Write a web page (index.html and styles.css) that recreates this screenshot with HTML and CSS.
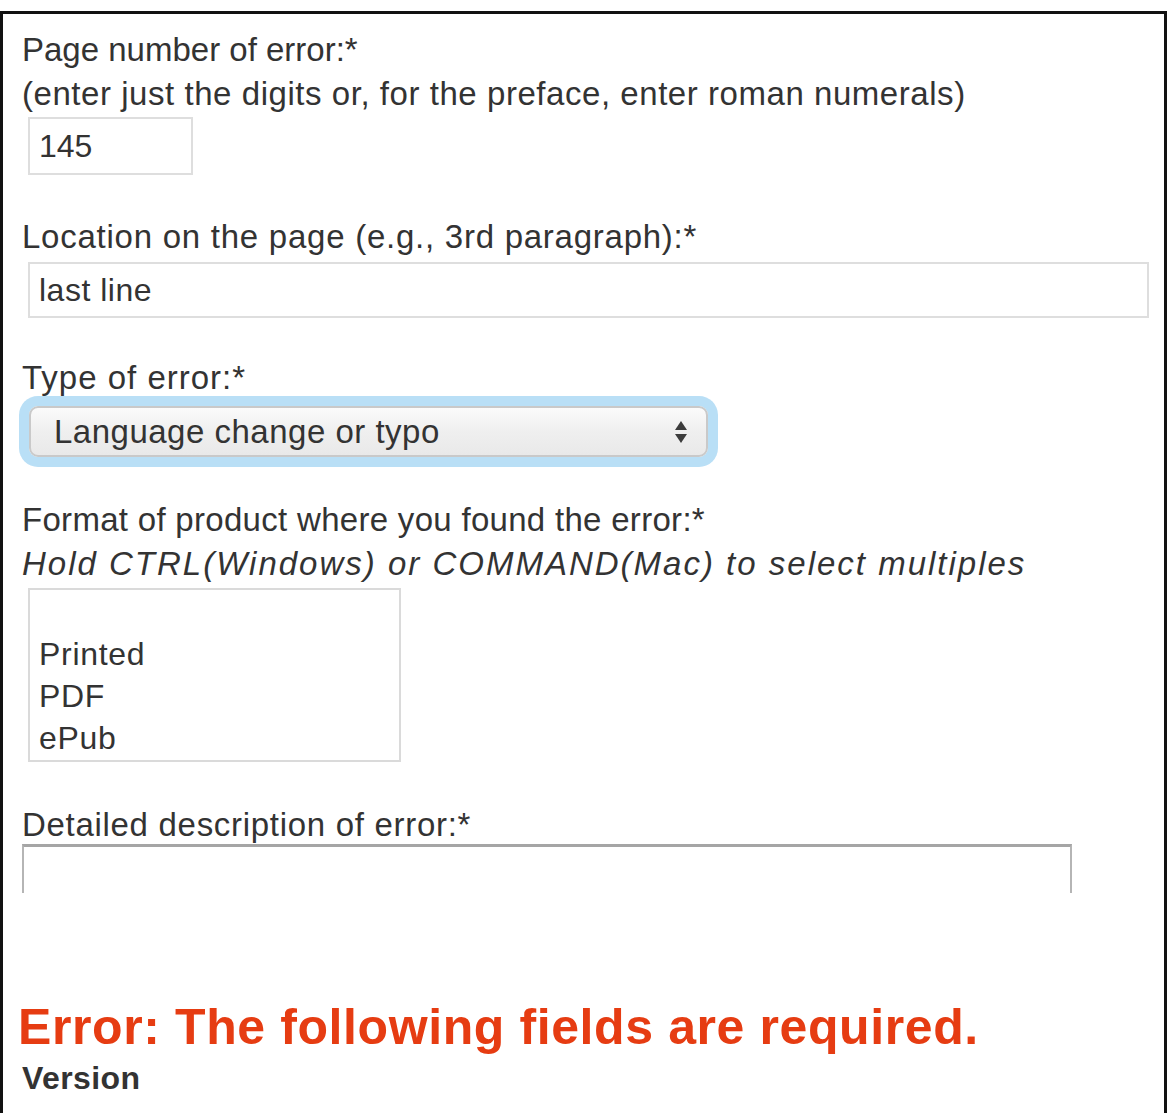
FILE: index.html
```html
<!DOCTYPE html>
<html lang="en">
<head>
<meta charset="utf-8">
<title>Report an error</title>
<link rel="stylesheet" href="styles.css">
</head>
<body>
<div class="frame">
  <form class="form">
    <div class="field field-page">
      <label class="label" for="page"><span class="l-page">Page number of error:*</span><br><span class="l-hint1">(enter just the digits or, for the preface, enter roman numerals)</span></label>
      <input class="text-input input-page" id="page" type="text" value="145">
    </div>

    <div class="field field-location">
      <label class="label l-location" for="loc">Location on the page (e.g., 3rd paragraph):*</label>
      <input class="text-input input-location" id="loc" type="text" value="last line">
    </div>

    <div class="field field-type">
      <label class="label l-type" for="type">Type of error:*</label>
      <div class="select-wrap">
        <select class="select" id="type">
          <option>Language change or typo</option>
        </select>
        <svg class="select-arrows" width="14" height="24" viewBox="0 0 14 24" aria-hidden="true">
          <path d="M7 1 L13 10 L1 10 Z" fill="#3c3c3c"/>
          <path d="M1 14 L13 14 L7 23 Z" fill="#3c3c3c"/>
        </svg>
      </div>
    </div>

    <div class="field field-format">
      <div class="label"><span class="l-format">Format of product where you found the error:*</span><br><em class="hint">Hold CTRL(Windows) or COMMAND(Mac) to select multiples</em></div>
      <div class="listbox" role="listbox" aria-multiselectable="true">
        <div class="option" role="option">&nbsp;</div>
        <div class="option" role="option">Printed</div>
        <div class="option" role="option">PDF</div>
        <div class="option" role="option">ePub</div>
      </div>
    </div>

    <div class="field field-desc">
      <label class="label l-desc" for="desc">Detailed description of error:*</label>
      <div class="textarea-stub" id="desc"></div>
    </div>

    <h2 class="error-title">Error: The following fields are required.</h2>
    <div class="error-item">Version</div>
  </form>
</div>
</body>
</html>
```

FILE: styles.css
```css
html, body {
  margin: 0;
  padding: 0;
  background: #ffffff;
}

body {
  font-family: "Liberation Sans", Arial, Helvetica, sans-serif;
  color: #333333;
}

.frame {
  margin-top: 11px;
  border-top: 3px solid #111111;
  border-left: 3px solid #111111;
  border-right: 3px solid #111111;
  min-height: 1102px;
  box-sizing: border-box;
  padding: 14px 0 0 19px;
}

.form {
  display: flex;
  flex-direction: column;
  align-items: flex-start;
}

.field {
  display: flex;
  flex-direction: column;
  align-items: flex-start;
}

.label {
  font-size: 33px;
  line-height: 44px;
  color: #333333;
  white-space: nowrap;
}

.l-page { letter-spacing: 0; }
.l-hint1 { letter-spacing: 0.55px; }
.l-location { letter-spacing: 0.75px; }
.l-type { letter-spacing: 1px; }
.l-format { letter-spacing: 0.3px; }
.l-desc { letter-spacing: 0.7px; }

.hint {
  font-style: italic;
  letter-spacing: 2px;
}

.text-input {
  box-sizing: border-box;
  border: 2px solid #dedede;
  background: #ffffff;
  font-family: "Liberation Sans", Arial, Helvetica, sans-serif;
  font-size: 32px;
  color: #333333;
  padding: 0 0 0 9px;
  margin: 0 0 0 6px;
  outline: none;
  letter-spacing: 0.5px;
}

.input-page {
  margin-top: 1px;
  width: 165px;
  height: 58px;
  letter-spacing: 0;
}

.field-location {
  margin-top: 40px;
}

.input-location {
  margin-top: 3px;
  width: 1121px;
  height: 56px;
}

.field-type {
  margin-top: 38px;
}

.select-wrap {
  position: relative;
  margin: 6px 0 0 7px;
  width: 679px;
  height: 51px;
  border-radius: 9px;
  box-shadow: 0 0 0 10px #b9dff6;
}

.select {
  appearance: none;
  -webkit-appearance: none;
  box-sizing: border-box;
  width: 100%;
  height: 100%;
  border: 2px solid #c9c9c9;
  border-radius: 9px;
  background: linear-gradient(to bottom, #fbfbfb 0%, #efefef 50%, #e9e9e9 100%);
  font-family: "Liberation Sans", Arial, Helvetica, sans-serif;
  font-size: 33px;
  letter-spacing: 0.5px;
  color: #333333;
  padding: 0 0 0 23px;
  outline: none;
}

.select-arrows {
  position: absolute;
  right: 20px;
  top: 14px;
}

.field-format {
  margin-top: 41px;
}

.listbox {
  box-sizing: border-box;
  margin: 2px 0 0 6px;
  width: 373px;
  height: 174px;
  border: 2px solid #dadada;
  padding: 1px 0 0 9px;
}

.option {
  font-size: 32px;
  line-height: 42px;
  letter-spacing: 0.7px;
  color: #333333;
}

.field-desc {
  margin-top: 41px;
}

.textarea-stub {
  box-sizing: border-box;
  margin-top: -3px;
  width: 1050px;
  height: 49px;
  border-top: 3px solid #a5a5a5;
  border-left: 2px solid #b5b5b5;
  border-right: 2px solid #b5b5b5;
}

.error-title {
  margin: 105px 0 0 -4px;
  font-size: 50px;
  line-height: 58px;
  font-weight: bold;
  letter-spacing: 0.6px;
  color: #e63c12;
  white-space: nowrap;
}

.error-item {
  font-size: 32px;
  line-height: 44px;
  font-weight: bold;
  letter-spacing: 0.4px;
  color: #333333;
}
```
